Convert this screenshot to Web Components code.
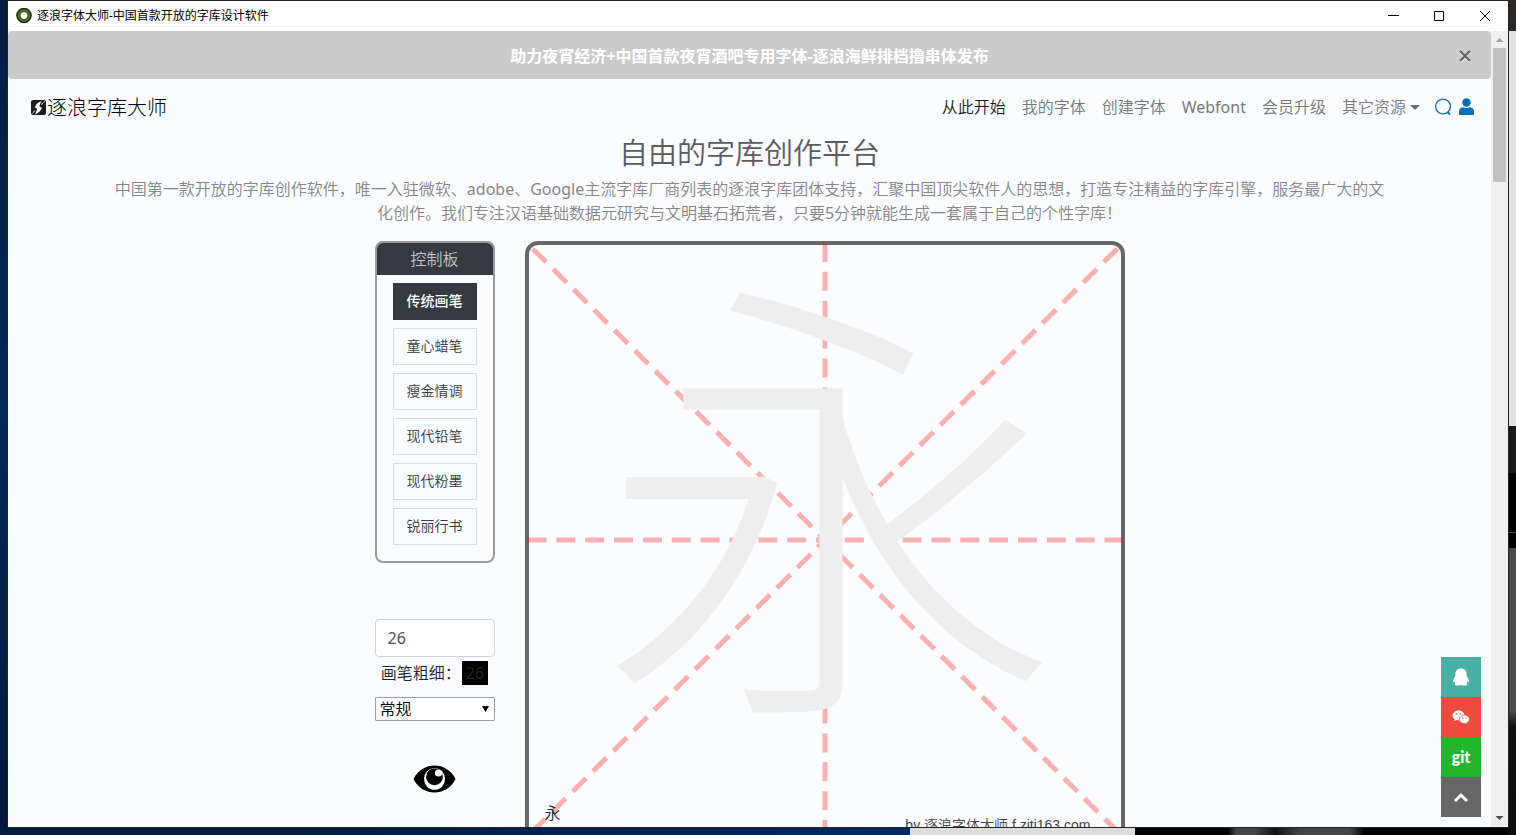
<!DOCTYPE html>
<html lang="zh-CN">
<head>
<meta charset="utf-8">
<title>逐浪字体大师-中国首款开放的字库设计软件</title>
<style>
  html, body { height: 100%; margin: 0; }
  body {
    --light: "Noto Sans", "Noto Sans CJK SC DemiLight", "Noto Sans CJK SC Light", "Noto Sans CJK SC", sans-serif;
    --thin: "Noto Sans CJK SC Light", "Noto Sans CJK SC", sans-serif;
    font: 16px/24px "Noto Sans", "Noto Sans CJK SC", sans-serif;
    color: #212529;
    overflow: hidden;
  }
</style>
</head>
<body>
<desk-top>
  <app-window>
    <title-bar slot="title">逐浪字体大师-中国首款开放的字库设计软件</title-bar>
    <notice-bar>助力夜宵经济+中国首款夜宵酒吧专用字体-逐浪海鲜排档撸串体发布</notice-bar>
    <site-nav></site-nav>
    <page-intro>
      <span slot="heading">自由的字库创作平台</span>
      中国第一款开放的字库创作软件，唯一入驻微软、adobe、Google主流字库厂商列表的逐浪字库团体支持，汇聚中国顶尖软件人的思想，打造专注精益的字库引擎，服务最广大的文化创作。我们专注汉语基础数据元研究与文明基石拓荒者，只要5分钟就能生成一套属于自己的个性字库！
    </page-intro>
    <glyph-studio>
      <brush-panel slot="tools"></brush-panel>
      <brush-size slot="tools"></brush-size>
      <glyph-canvas char="永"></glyph-canvas>
    </glyph-studio>
    <side-dock slot="dock"></side-dock>
  </app-window>
</desk-top>

<script>
const define = (name, html, setup) => {
  const template = document.createElement('template');
  template.innerHTML = html;
  customElements.define(name, class extends HTMLElement {
    constructor() {
      super();
      this.attachShadow({ mode: 'open' }).append(template.content.cloneNode(true));
    }
    connectedCallback() { if (setup) setup(this, this.shadowRoot); }
  });
};

define('desk-top', `
<style>
  :host {
    display: block; height: 100%; box-sizing: border-box; padding: 1px 8px 8px;
    background:
      linear-gradient(#33261f, #2a2725) right top / 50% 31px no-repeat,
      linear-gradient(#e2e2e2, #e2e2e2) right 31px / 8px 395px no-repeat,
      linear-gradient(#1a1a1a 47px, #000 47px 106px, #444 106px 107px, #000 107px 122px, #4a4a4a 122px 285px, #111 300px, #000) right 426px / 8px 100% no-repeat,
      linear-gradient(90deg, #001c3d 0, #001c3d 20%, #002b5c 60%, #002b5c 910px, #dcdcdc 910px 1135px, #000 1135px 1228px, #444 1236px 1255px, #111 1275px, #444 1300px 1350px, #000 1365px) left bottom / 100% 8px no-repeat,
      linear-gradient(#001c3d, #002a58 50%, #00183a);
  }
</style>
<slot></slot>`);

define('app-window', `
<style>
  :host {
    display: flex; flex-direction: column; height: 100%; position: relative;
    background: #fbfcfe; box-shadow: 0 0 0 1px #1f252b;
  }
  .view { display: flex; flex: 1; min-height: 0; position: relative; }
  main { flex: 1; min-width: 0; overflow: hidden; }
  .track {
    width: 17px; box-sizing: border-box; background: #f0f0f0; display: flex;
    flex-direction: column; align-items: center;
  }
  .track svg { display: block; width: 17px; height: 17px; }
  .thumb { width: 13px; height: 134px; background: #c1c1c1; }
  .gap { flex: 1; }
  .dock { position: absolute; right: 27px; bottom: 10px; }
</style>
<slot name="title"></slot>
<div class="view">
  <main><slot></slot></main>
  <div class="track">
    <svg viewBox="0 0 17 17"><path d="M4.500 11h8l-4-4z" fill="#a3a3a3"/></svg>
    <div class="thumb"></div>
    <div class="gap"></div>
    <svg viewBox="0 0 17 17"><path d="M4.500 6h8l-4 4z" fill="#505050"/></svg>
  </div>
  <div class="dock"><slot name="dock"></slot></div>
</div>`);

define('title-bar', `
<style>
  :host { display: flex; align-items: center; height: 30px; background: #fff; color: #000; font-size: 12px; line-height: 16px; padding-left: 8px; }
  .logo { width: 16px; height: 16px; margin-right: 5px; }
  .name { flex: 1; }
  button { width: 46px; height: 30px; padding: 0; border: 0; background: none; display: grid; place-items: center; }
  button svg { width: 11px; height: 11px; fill: none; stroke: #000; }
</style>
<svg class="logo" viewBox="0 0 16 16"><circle cx="8" cy="7.500" r="7.800" fill="#1c2e0c"/><circle cx="8" cy="7.500" r="5.200" fill="none" stroke="#55722a" stroke-width="2"/><circle cx="8" cy="7.500" r="3.400" fill="#fff"/></svg>
<span class="name"><slot></slot></span>
<button aria-label="最小化"><svg viewBox="0 0 11 11"><path d="M0 4.500h11"/></svg></button>
<button aria-label="最大化"><svg viewBox="0 0 11 11"><path d="M.5.5h9v9H.5z"/></svg></button>
<button aria-label="关闭"><svg viewBox="0 0 11 11"><path d="M0 0l10 10M10 0L0 10"/></svg></button>`);

define('notice-bar', `
<style>
  :host { display: grid; grid-template-columns: 52px 1fr 52px; align-items: center; height: 48px; background: #cbcbcb; border-radius: 4px; color: #fff; font-weight: 700; text-align: center; }
  p { margin: 0; grid-column: 2; padding-top: 2px; }
  button { width: 52px; height: 48px; padding: 2px 0 0; border: 0; background: none; display: grid; place-items: center; }
  svg { width: 12px; height: 12px; }
</style>
<p><slot></slot></p>
<button aria-label="关闭公告"><svg viewBox="0 0 12 12" fill="none" stroke-width="2.400"><path d="M1 2l10 10M11 2L1 12" stroke="#fff"/><path d="M1 1l10 10M11 1L1 11" stroke="#666"/></svg></button>`);

define('site-nav', `
<style>
  :host { display: flex; align-items: center; justify-content: space-between; height: 56px; padding: 0 16px 0 23px; font-family: var(--light); }
  a { color: #77787a; text-decoration: none; white-space: nowrap; }
  .brand { display: flex; align-items: center; font-size: 20px; color: #000; font-family: var(--thin); }
  .brand svg { width: 16px; height: 16px; }
  nav { display: flex; align-items: center; gap: 16px; }
  .active { color: #17191c; }
  .more { display: flex; align-items: center; gap: 4px; }
  .more::after { content: ""; border: 5px solid transparent; border-top-color: #6d6e70; border-bottom: 0; }
  .icons { display: flex; gap: 7px; margin-left: -2px; }
  .icons svg { display: block; width: 17px; height: 18px; }
</style>
<a class="brand" href="#home">
  <svg viewBox="0 0 16 16"><rect y="1" width="15" height="15" rx="2" fill="#1c1c1c"/><path d="M10.500 2C6.500 3.500 4.500 5.500 4 8.500c1.500.5 2.200 1.200 2 2.300L4 15.500c3.800-1.500 6.200-4 7-6.700-1.700-.5-2.800-1.200-2.500-2.500z" fill="#fff"/><path d="M13.500 2.500c-1.500 1-2.500 2-2.800 3.200M1.300 14.500c1-.8 1.800-1.700 2.300-3" fill="none" stroke="#fff"/></svg>逐浪字库大师</a>
<nav>
  <a class="active" href="#start">从此开始</a>
  <a href="#mine">我的字体</a>
  <a href="#create">创建字体</a>
  <a href="#webfont">Webfont</a>
  <a href="#vip">会员升级</a>
  <a class="more" href="#more">其它资源</a>
  <div class="icons">
    <a href="#search" aria-label="搜索"><svg viewBox="0 0 17 18" fill="none" stroke="#0f79c0" stroke-width="1.400"><circle cx="9" cy="8.500" r="7.400"/><path d="M13.500 14l2.500 2.500" stroke-width="2"/></svg></a>
    <a href="#user" aria-label="用户"><svg viewBox="0 0 17 18" fill="#0471bb"><circle cx="8.500" cy="4.500" r="4.200"/><path d="M1 16v-2.500c0-3 2-4.300 4.500-4.300 2 1.200 4 1.200 6 0 2.500 0 4.500 1.300 4.500 4.300V16c0 .5-.5 1-1 1H2c-.5 0-1-.5-1-1z"/></svg></a>
  </div>
</nav>`);

define('page-intro', `
<style>
  :host { display: block; padding: 0 100px; text-align: center; font-family: var(--light); }
  h1 { margin: 0 0 6px; font-size: 29px; line-height: 36px; font-weight: 400; color: #5a5b5d; }
  p { margin: 0; color: #85868a; }
</style>
<h1><slot name="heading"></slot></h1>
<p><slot></slot></p>`);

define('glyph-studio', `
<style>
  :host { display: grid; grid-template-columns: 120px 600px; gap: 30px; justify-content: center; margin-top: 16px; }
</style>
<div><slot name="tools"></slot></div>
<div><slot></slot></div>`);

define('brush-panel', `
<style>
  :host { display: block; border: 2px solid #999; border-radius: 8px; overflow: hidden; padding-bottom: 16px; font-family: var(--light); }
  h2 { margin: 0; background: #343a40; color: #c4c5c6; font-size: 16px; line-height: 32px; font-weight: 400; text-align: center; }
  button { display: block; width: 84px; height: 37px; margin: 8px auto 0; padding: 0 0 2px; border: 1px solid #dcddde; background: none; color: #343a40; font: inherit; font-size: 14px; }
  button.on { background: #343a40; border-color: #343a40; color: #fff; font-family: "Noto Sans", "Noto Sans CJK SC", sans-serif; font-weight: 500; }
</style>
<h2>控制板</h2>
<button class="on">传统画笔</button>
<button>童心蜡笔</button>
<button>瘦金情调</button>
<button>现代铅笔</button>
<button>现代粉墨</button>
<button>锐丽行书</button>`);

define('brush-size', `
<style>
  :host { display: block; margin-top: 56px; font-family: var(--light); }
  input, select { display: block; width: 100%; box-sizing: border-box; font: inherit; background-color: #fff; }
  input { height: 38px; padding: 0 12px; border: 1px solid #ced4da; border-radius: 4px; color: #495057; }
  .size { display: flex; justify-content: center; align-items: center; gap: 1px; margin: 4px 0 12px; white-space: nowrap; }
  output { background: #000; padding: 0 4px; }
  select { appearance: none; height: 24px; padding: 0 4px; border: 1px solid #a0a0a0; border-radius: 1px; color: #000; line-height: 22px; }
  .pick { display: grid; align-items: center; }
  .pick > * { grid-area: 1 / 1; }
  .pick svg { justify-self: end; width: 7px; height: 6px; margin-right: 6px; pointer-events: none; }
  .eye { display: block; width: 44px; height: 32px; margin: 42px auto 0; padding: 0; border: 0; background: none; }
  .eye svg { display: block; width: 44px; height: 32px; }
</style>
<input id="n" value="26" aria-label="画笔大小">
<div class="size"><label for="n">画笔粗细：</label><output for="n">26</output></div>
<div class="pick">
  <select aria-label="字重"><option>常规</option></select>
  <svg viewBox="0 0 7 6"><path d="M0 0h7L3.500 6z"/></svg>
</div>
<button class="eye" aria-label="预览"><svg viewBox="0 0 44 32"><path d="M.5 16C5 7 13 2.500 21.500 2.500S38 7 42.500 16C38 25 30 29.500 21.500 29.500S5 25 .5 16z"/><ellipse cx="21.500" cy="16" rx="10.500" ry="10.800" fill="#fff"/><circle cx="21.500" cy="13.800" r="8.400"/><circle cx="25.500" cy="10" r="3.600" fill="#fff"/></svg></button>`);

define('glyph-canvas', `
<style>
  :host { display: grid; height: 600px; position: relative; font-family: var(--light); }
  .grid { width: 600px; height: 600px; }
  .model { position: absolute; left: 74px; top: 0; font-family: var(--thin); font-size: 464px; line-height: 472px; color: #eee; }
  .thumb { position: absolute; left: 20px; top: 560px; }
  .credit { position: absolute; right: 34px; top: 572px; font-size: 14px; color: #444; font-family: "Liberation Sans", "Noto Sans CJK SC DemiLight", "Noto Sans CJK SC", sans-serif; }
</style>
<svg class="grid" viewBox="0 0 600 600" fill="none">
  <rect x="2" y="2" width="596" height="596" rx="11" stroke="#666867" stroke-width="4"/>
  <g stroke="#f00" stroke-opacity=".3" stroke-width="5" stroke-dasharray="19 9.850">
    <path d="M2.500 299H598"/>
    <path d="M300 2v596"/>
    <path d="M0 0l600 598" stroke-dashoffset="18"/>
    <path d="M600 0L0 598" stroke-dashoffset="18"/>
  </g>
</svg>
<div class="model"></div>
<div class="thumb"></div>
<div class="credit">by 逐浪字体大师 f.ziti163.com</div>`, (host, root) => {
  const char = host.getAttribute('char');
  root.querySelector('.model').textContent = char;
  root.querySelector('.thumb').textContent = char;
});

define('side-dock', `
<style>
  :host { display: grid; grid-auto-rows: 40px; width: 40px; }
  a { display: grid; place-items: center; color: #fff; font: 900 16px/20px Lato, sans-serif; text-decoration: none; }
  svg { width: 20px; height: 20px; }
  .qq { background: #49aea4; } .wx { background: #ec4a3c; } .git { background: #24b62a; } .up { background: #666; }
</style>
<a class="qq" href="#qq" aria-label="QQ"><svg viewBox="0 0 20 20" fill="#fff"><path d="M10 1.500c3.600 0 5.600 2.300 5.600 5.400v2c1.600 2 2.600 4.300 2.200 6-.3.900-1 .3-1.500-.4-.2.900-.6 1.500-1.100 2 1 .4 1.300.8 1.200 1.300-.3 1-5.400 1-6.400.3-1 .7-6.100.7-6.400-.3-.1-.5.200-.9 1.200-1.300-.5-.5-.9-1.100-1.100-2-.5.700-1.200 1.300-1.500.4-.4-1.700.6-4 2.200-6v-2c0-3.100 2-5.400 5.600-5.400z"/></svg></a>
<a class="wx" href="#wechat" aria-label="微信"><svg viewBox="0 0 20 20"><path d="M7.500 3.500c-3.400 0-6 2.200-6 5 0 1.600.8 2.900 2.100 3.800l-.6 2 2.300-1.200c3.800 1 8.200-.8 8.200-4.600 0-2.800-2.600-5-6-5z" fill="#fff"/><path d="M13.300 8c-3 0-5.100 1.900-5.100 4.300 0 3.200 3.500 4.800 6.500 4l1.900 1-.5-1.700c1.400-.8 2.300-2 2.300-3.400 0-2.300-2.200-4.200-5.100-4.200z" fill="#fff" stroke="#ec4a3c" stroke-width=".7"/><g fill="#ec4a3c"><circle cx="5.500" cy="7" r=".8"/><circle cx="9.500" cy="7" r=".8"/><circle cx="11.700" cy="11" r=".7"/><circle cx="15" cy="11" r=".7"/></g></svg></a>
<a class="git" href="#git">git</a>
<a class="up" href="#top" aria-label="返回顶部"><svg viewBox="0 0 20 20" fill="none" stroke="#fff" stroke-width="3"><path d="M4 14l6-6 6 6"/></svg></a>`);
</script>
</body>
</html>
